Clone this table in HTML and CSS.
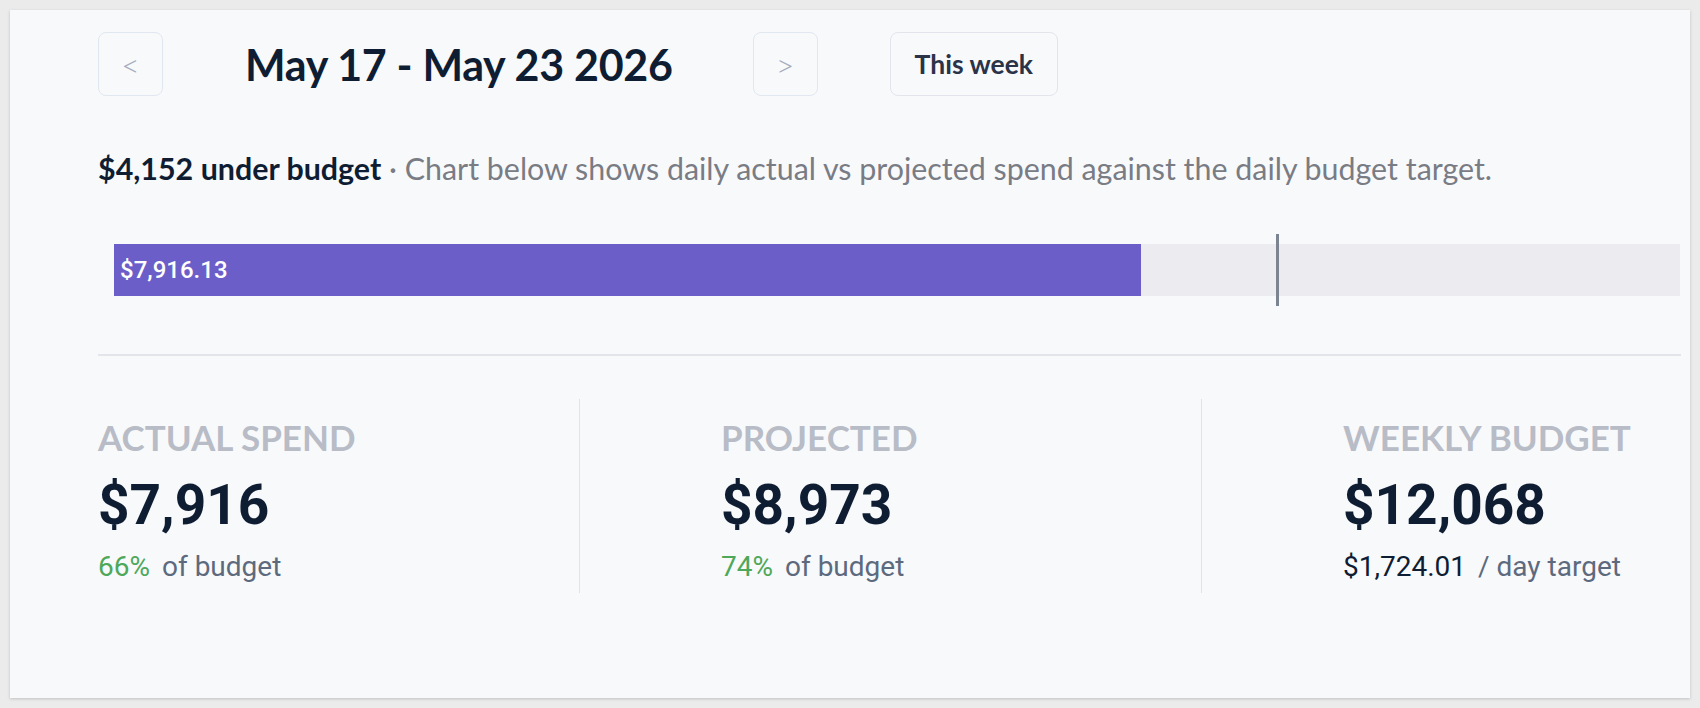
FILE: index.html
```html
<!DOCTYPE html>
<html lang="en">
<head>
<meta charset="utf-8">
<title>Weekly budget</title>
<link rel="stylesheet" href="styles.css">
</head>
<body>
<div class="card">
  <div class="header">
    <button class="nav-btn" type="button">&lt;</button>
    <h1 class="range">May 17 - May 23 2026</h1>
    <button class="nav-btn" type="button">&gt;</button>
    <button class="today-btn" type="button">This week</button>
  </div>

  <p class="summary"><strong>$4,152 under budget</strong> · Chart below shows daily actual vs projected spend against the daily budget target.</p>

  <div class="chart">
    <div class="track">
      <div class="fill" style="width: 65.6%"><span class="fill-label">$7,916.13</span></div>
      <div class="marker" style="left: 74.2%"></div>
    </div>
  </div>

  <div class="stats">
    <div class="stat">
      <div class="stat-label">ACTUAL SPEND</div>
      <div class="stat-value">$7,916</div>
      <div class="stat-sub"><span class="pct">66%</span><span class="muted">of budget</span></div>
    </div>
    <div class="stat">
      <div class="stat-label">PROJECTED</div>
      <div class="stat-value">$8,973</div>
      <div class="stat-sub"><span class="pct">74%</span><span class="muted">of budget</span></div>
    </div>
    <div class="stat">
      <div class="stat-label">WEEKLY BUDGET</div>
      <div class="stat-value">$12,068</div>
      <div class="stat-sub"><span class="dark">$1,724.01</span><span class="muted">/ day target</span></div>
    </div>
  </div>
</div>
</body>
</html>
```

FILE: styles.css
```css
* { box-sizing: border-box; }

html, body { margin: 0; }

body {
  padding: 10px;
  background: #ebebeb;
  font-family: "Lato", "Noto Sans", sans-serif;
  color: #0f1d33;
}

.card {
  height: 688px;
  background: #f8f9fb;
  box-shadow: 0 1px 3px rgba(0, 0, 0, 0.18);
  padding: 22px 9px 0 88px;
}

.header {
  display: flex;
  align-items: center;
}

.nav-btn {
  width: 65px;
  height: 64px;
  border: 1.5px solid #e1e7f0;
  border-radius: 8px;
  background: #f8f9fb;
  color: #a3abba;
  font-family: "Lato", sans-serif;
  font-size: 32px;
  font-weight: 300;
  padding: 0;
}

.range {
  margin: 0 80px 0 82px;
  font-size: 43px;
  font-weight: 700;
  letter-spacing: -0.3px;
  color: #0f1d33;
  line-height: 1;
}

.today-btn {
  margin-left: 72px;
  height: 64px;
  padding: 0 24px;
  border: 1.5px solid #e3e5ec;
  border-radius: 8px;
  background: #f8f9fb;
  color: #2a3348;
  font-family: "Lato", sans-serif;
  font-size: 26.5px;
  font-weight: 700;
}

.summary {
  margin: 54px 0 0;
  font-size: 30.4px;
  line-height: 36px;
  color: #797c84;
}

.summary strong {
  color: #0f1d33;
  font-weight: 700;
}

.chart {
  margin-top: 48px;
  padding: 10px 1px 0 16px;
  height: 122px;
  border-bottom: 2px solid #e3e5ea;
}

.track {
  position: relative;
  height: 52px;
  background: #ecebf0;
}

.fill {
  height: 100%;
  background: #6c5ec9;
  display: flex;
  align-items: center;
  padding-left: 6px;
}

.fill-label {
  font-family: "Roboto", sans-serif;
  font-weight: 500;
  font-size: 24px;
  color: #ffffff;
}

.marker {
  position: absolute;
  top: -10px;
  bottom: -10px;
  width: 3px;
  background: #7c8492;
}

.stats {
  display: grid;
  grid-template-columns: 481px 622px 1fr;
  margin-top: 43px;
}

.stat {
  height: 194px;
  padding-top: 16px;
}

.stat + .stat {
  border-left: 1.5px solid #e1e3e8;
  padding-left: 141px;
}

.stat-label {
  font-size: 35px;
  font-weight: 700;
  color: #b8bcc6;
  line-height: 44px;
}

.stat-value {
  margin-top: 14px;
  font-family: "Roboto", sans-serif;
  font-weight: 700;
  font-size: 55px;
  line-height: 64px;
  color: #0f1d33;
}

.stat-sub {
  margin-top: 14px;
  font-family: "Roboto", sans-serif;
  font-size: 28px;
  line-height: 32px;
}

.pct { color: #4ea85a; }
.muted { color: #5d6a7e; margin-left: 12px; }
.dark { color: #0f1d33; }
```
